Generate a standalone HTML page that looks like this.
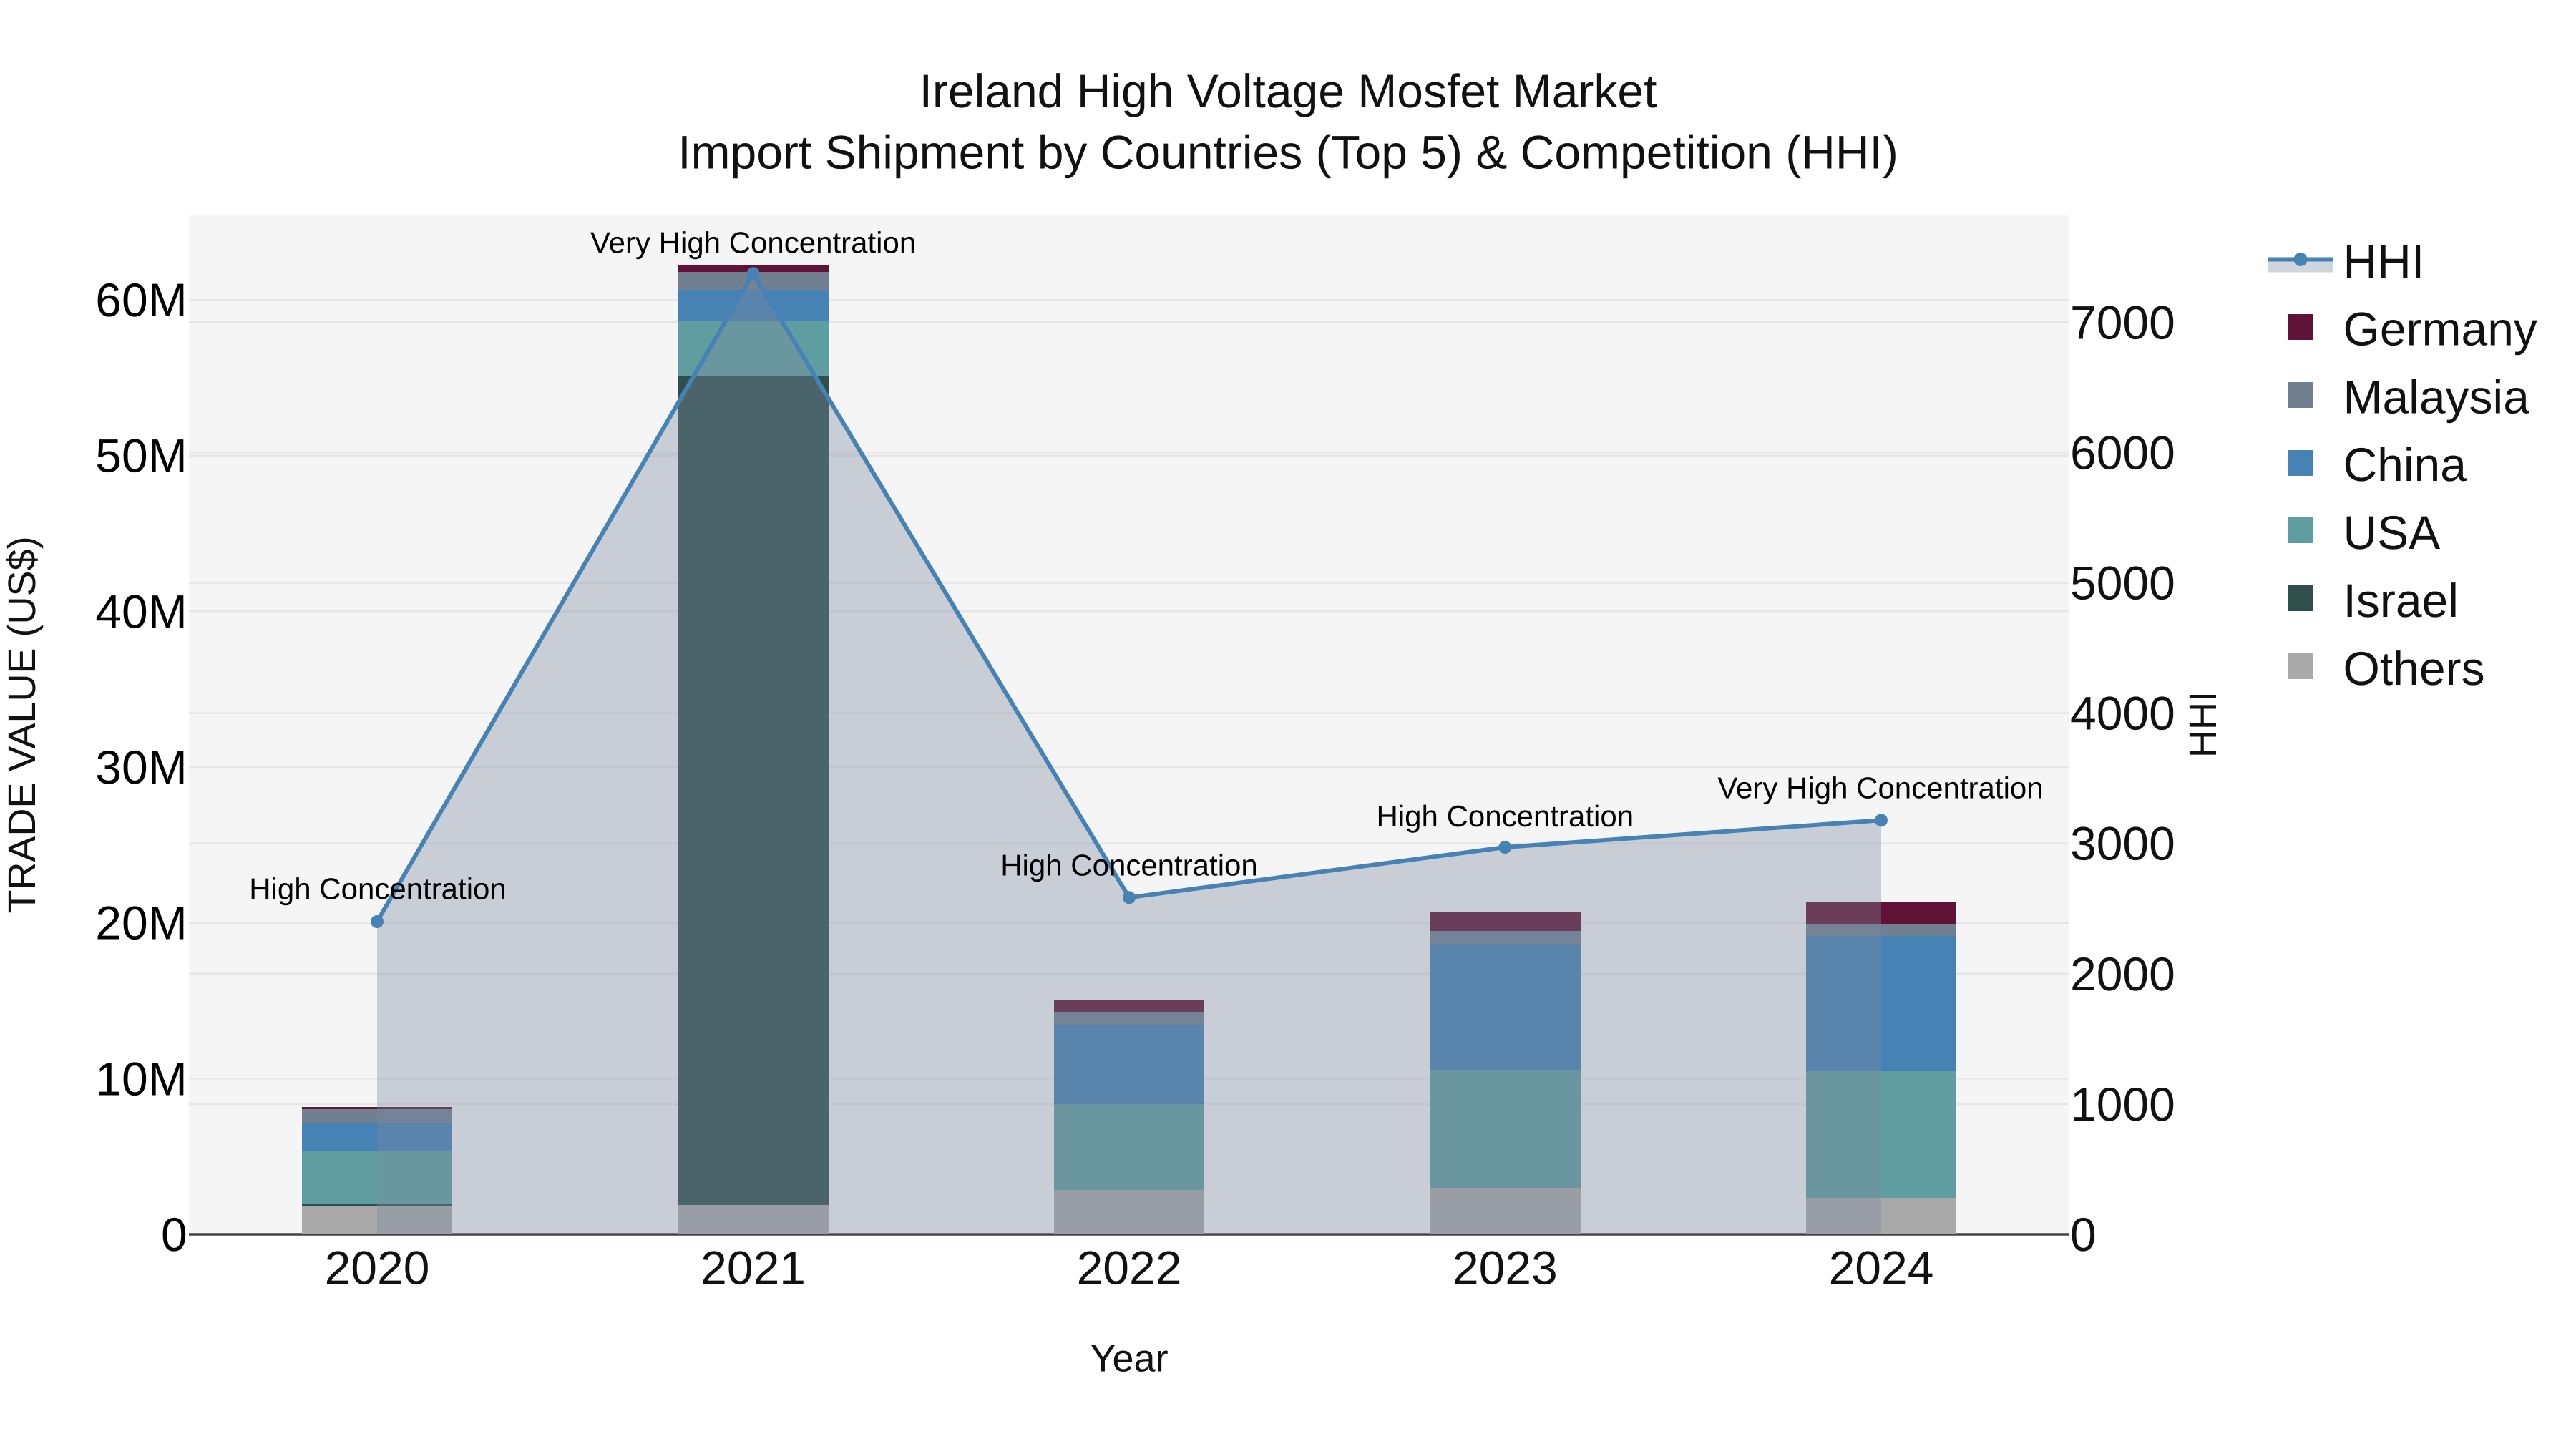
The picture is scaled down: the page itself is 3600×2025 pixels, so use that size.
<!DOCTYPE html>
<html lang="en">
<head>
<meta charset="utf-8">
<title>Ireland High Voltage Mosfet Market</title>
<style>
html,body{margin:0;padding:0;background:#fff;width:3600px;height:2025px;overflow:hidden}
svg{display:block}
text{font-family:"Liberation Sans",sans-serif;text-rendering:geometricPrecision}
</style>
</head>
<body>
<svg xmlns="http://www.w3.org/2000/svg" width="3600" height="2025" viewBox="0 0 3600 2025">
<rect width="3600" height="2025" fill="#fff"/>
<rect x="264" y="300" width="2628" height="1425" fill="#f5f5f5"/>

<g stroke="#e6e6e6" stroke-width="2.5" fill="none">
<path d="M264 419H2892M264 636.7H2892M264 854.3H2892M264 1072H2892M264 1289.7H2892M264 1507.3H2892"/>
<path d="M264 450.3H2892M264 632.4H2892M264 814.5H2892M264 996.6H2892M264 1178.7H2892M264 1360.8H2892M264 1542.9H2892"/>
</g>
<path d="M264 1725H2892" stroke="#444" stroke-width="3.5" fill="none"/>

<g shape-rendering="crispEdges">
<!-- 2020 -->
<rect x="422" y="1547" width="210" height="3" fill="#601336"/>
<rect x="422" y="1550" width="210" height="19" fill="#708090"/>
<rect x="422" y="1569" width="210" height="40" fill="#4682b4"/>
<rect x="422" y="1609" width="210" height="73" fill="#5f9ea0"/>
<rect x="422" y="1682" width="210" height="4" fill="#2f4f4f"/>
<rect x="422" y="1686" width="210" height="39" fill="#a9a9a9"/>
<!-- 2021 -->
<rect x="947" y="371" width="211" height="9" fill="#601336"/>
<rect x="947" y="380" width="211" height="25" fill="#708090"/>
<rect x="947" y="405" width="211" height="44" fill="#4682b4"/>
<rect x="947" y="449" width="211" height="76" fill="#5f9ea0"/>
<rect x="947" y="525" width="211" height="1159" fill="#2f4f4f"/>
<rect x="947" y="1684" width="211" height="41" fill="#a9a9a9"/>
<!-- 2022 -->
<rect x="1473" y="1397" width="210" height="17" fill="#601336"/>
<rect x="1473" y="1414" width="210" height="19" fill="#708090"/>
<rect x="1473" y="1433" width="210" height="110" fill="#4682b4"/>
<rect x="1473" y="1543" width="210" height="120" fill="#5f9ea0"/>
<rect x="1473" y="1663" width="210" height="62" fill="#a9a9a9"/>
<!-- 2023 -->
<rect x="1998" y="1274" width="211" height="27" fill="#601336"/>
<rect x="1998" y="1301" width="211" height="18" fill="#708090"/>
<rect x="1998" y="1319" width="211" height="176" fill="#4682b4"/>
<rect x="1998" y="1495" width="211" height="165" fill="#5f9ea0"/>
<rect x="1998" y="1660" width="211" height="65" fill="#a9a9a9"/>
<!-- 2024 -->
<rect x="2524" y="1260" width="210" height="32" fill="#601336"/>
<rect x="2524" y="1292" width="210" height="16" fill="#708090"/>
<rect x="2524" y="1308" width="210" height="189" fill="#4682b4"/>
<rect x="2524" y="1497" width="210" height="177" fill="#5f9ea0"/>
<rect x="2524" y="1674" width="210" height="51" fill="#a9a9a9"/>
</g>

<path d="M527 1288L1052.6 382.3L1578 1254.3L2103.3 1184L2629 1146.3V1725H527Z" fill="rgba(124,136,157,0.36)"/>
<path d="M527 1288L1052.6 382.3L1578 1254.3L2103.3 1184L2629 1146.3" fill="none" stroke="#4682b4" stroke-width="6" stroke-linejoin="round"/>
<g fill="#4682b4">
<circle cx="527" cy="1288" r="9"/>
<circle cx="1052.6" cy="382.3" r="9"/>
<circle cx="1578" cy="1254.3" r="9"/>
<circle cx="2103.3" cy="1184" r="9"/>
<circle cx="2629" cy="1146.3" r="9"/>
</g>

<g font-size="42" fill="#000" text-anchor="middle">
<text x="528" y="1256.7">High Concentration</text>
<text x="1052.6" y="353.3">Very High Concentration</text>
<text x="1578" y="1223.6">High Concentration</text>
<text x="2103.3" y="1155">High Concentration</text>
<text x="2628" y="1115.7">Very High Concentration</text>
</g>

<g font-size="66" fill="#111" text-anchor="middle">
<text x="1800" y="150">Ireland High Voltage Mosfet Market</text>
<text x="1800" y="235.7">Import Shipment by Countries (Top 5) &amp; Competition (HHI)</text>
</g>

<g font-size="66" fill="#000" text-anchor="end">
<text x="261.7" y="442">60M</text>
<text x="261.7" y="659.7">50M</text>
<text x="261.7" y="877.3">40M</text>
<text x="261.7" y="1095">30M</text>
<text x="261.7" y="1312.7">20M</text>
<text x="261.7" y="1530.3">10M</text>
<text x="261.7" y="1748">0</text>
</g>

<g font-size="66" fill="#111" text-anchor="start">
<text x="2893" y="473.3">7000</text>
<text x="2893" y="655.4">6000</text>
<text x="2893" y="837.5">5000</text>
<text x="2893" y="1019.6">4000</text>
<text x="2893" y="1201.7">3000</text>
<text x="2893" y="1383.8">2000</text>
<text x="2893" y="1565.9">1000</text>
<text x="2893" y="1748">0</text>
</g>

<g font-size="66" fill="#111" text-anchor="middle">
<text x="527" y="1794.5">2020</text>
<text x="1052.6" y="1794.5">2021</text>
<text x="1578" y="1794.5">2022</text>
<text x="2103.3" y="1794.5">2023</text>
<text x="2629" y="1794.5">2024</text>
</g>

<text x="1578" y="1916.7" font-size="54" fill="#111" text-anchor="middle">Year</text>
<text transform="translate(49 1013) rotate(-90)" font-size="54" fill="#111" text-anchor="middle">TRADE VALUE (US$)</text>
<text transform="translate(3097 1012.5) rotate(-90)" font-size="54" fill="#111" text-anchor="middle">HHI</text>

<rect x="3170" y="362.5" width="90" height="18" fill="rgba(124,136,157,0.36)"/>
<path d="M3170 362.5H3260" stroke="#4682b4" stroke-width="6" fill="none"/>
<circle cx="3215" cy="362.5" r="9.5" fill="#4682b4"/>
<g shape-rendering="crispEdges">
<rect x="3197" y="439" width="36" height="36" fill="#601336"/>
<rect x="3197" y="534" width="36" height="36" fill="#708090"/>
<rect x="3197" y="629" width="36" height="36" fill="#4682b4"/>
<rect x="3197" y="723" width="36" height="36" fill="#5f9ea0"/>
<rect x="3197" y="818" width="36" height="36" fill="#2f4f4f"/>
<rect x="3197" y="913" width="36" height="36" fill="#a9a9a9"/>
</g>
<g font-size="66" fill="#111">
<text x="3274.5" y="388">HHI</text>
<text x="3274.5" y="482.5">Germany</text>
<text x="3274.5" y="577.5">Malaysia</text>
<text x="3274.5" y="672">China</text>
<text x="3274.5" y="767">USA</text>
<text x="3274.5" y="862">Israel</text>
<text x="3274.5" y="957">Others</text>
</g>
</svg>
</body>
</html>
